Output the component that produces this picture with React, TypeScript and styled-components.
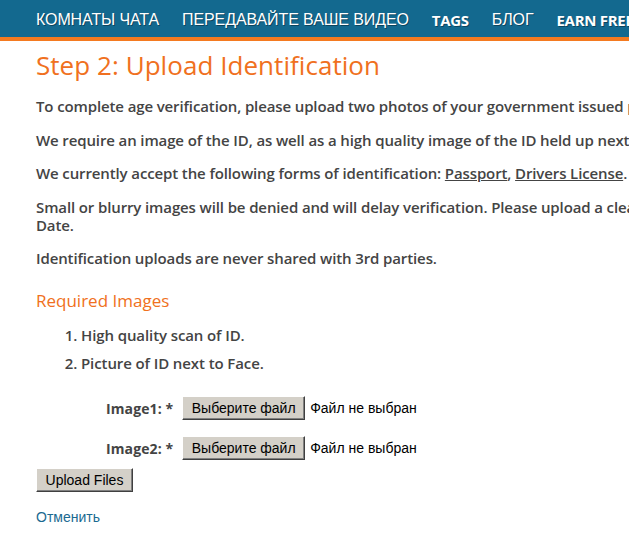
import styled, { createGlobalStyle } from "styled-components";

const Global = createGlobalStyle`
  html, body {
    margin: 0;
    padding: 0;
    background: #ffffff;
  }
  body {
    font-family: "Open Sans", "DejaVu Sans", sans-serif;
    overflow: hidden;
  }
`;

const Nav = styled.nav`
  height: 34px;
  padding: 3px 0 0 36px;
  background: #13698f;
  border-bottom: 4px solid #f47a20;
  display: flex;
  align-items: center;
  gap: 23px;
  white-space: nowrap;
  overflow: hidden;
`;

const NavItem = styled.a<{ $bold?: boolean }>`
  color: #ffffff;
  text-decoration: none;
  text-transform: uppercase;
  font-family: ${(p) =>
    p.$bold ? `"Open Sans", sans-serif` : `"Liberation Sans", Arial, sans-serif`};
  font-weight: ${(p) => (p.$bold ? 700 : 400)};
  font-size: ${(p) => (p.$bold ? "15px" : "16px")};
  letter-spacing: ${(p) => (p.$bold ? "-0.3px" : "-0.1px")};
  text-shadow: 1px 1px 0 rgba(0, 0, 0, 0.35);
`;

const Page = styled.main`
  padding: 9px 0 0 36px;
  color: #444444;
  white-space: nowrap;
`;

const Title = styled.h1`
  margin: 0 0 17px;
  font-size: 26px;
  font-weight: 500;
  letter-spacing: 0.05px;
  color: #f07020;
  line-height: 30px;
`;

const Para = styled.p`
  margin: 0 0 15.5px;
  font-size: 15px;
  font-weight: 600;
  line-height: 18px;
  letter-spacing: -0.12px;
`;

const Doc = styled.a`
  color: #444444;
  text-decoration: underline;
`;

const Subtitle = styled.h2`
  margin: 24px 0 15px;
  font-size: 17px;
  font-weight: 500;
  color: #f07020;
  line-height: 20px;
`;

const List = styled.ol`
  margin: 0;
  padding-left: 45px;
  font-size: 15px;
  font-weight: 600;
  letter-spacing: -0.1px;
  line-height: 18px;

  li {
    margin-bottom: 10px;
  }
`;

const Form = styled.form`
  margin-top: 24px;
  display: flex;
  flex-direction: column;
`;

const FieldRow = styled.div`
  display: flex;
  align-items: center;
  gap: 9px;
  padding-left: 70px;
  height: 24px;
  margin-bottom: 16px;
`;

const Label = styled.label`
  font-size: 14px;
  font-weight: 700;
  color: #444444;
  letter-spacing: 0.1px;
`;

const FileWrap = styled.span`
  display: flex;
  align-items: center;
  gap: 5px;
  font-family: "Liberation Sans", Arial, sans-serif;
  font-size: 14px;
  color: #000000;
`;

const Button = styled.button<{ $w: number }>`
  width: ${(p) => p.$w}px;
  height: 24px;
  padding: 0;
  background: #d4d0c8;
  border: 1px solid;
  border-color: #ffffff #404040 #404040 #ffffff;
  box-shadow: inset -1px -1px 0 #808080;
  font-family: "Liberation Sans", Arial, sans-serif;
  font-size: 14px;
  color: #000000;
`;

const Actions = styled.div`
  margin-top: -8px;
  display: flex;
  flex-direction: column;
  align-items: flex-start;
  gap: 17px;
`;

const Cancel = styled.a`
  font-family: "Liberation Sans", Arial, sans-serif;
  font-size: 14px;
  color: #1b6a91;
  text-decoration: none;
`;

function FileField({ name }: { name: string }) {
  return (
    <FieldRow>
      <Label>{name}: *</Label>
      <FileWrap>
        <Button type="button" $w={123}>
          Выберите файл
        </Button>
        Файл не выбран
      </FileWrap>
    </FieldRow>
  );
}

export default function App() {
  return (
    <>
      <Global />
      <Nav>
        <NavItem href="#">Комнаты чата</NavItem>
        <NavItem href="#">Передавайте ваше видео</NavItem>
        <NavItem href="#" $bold>
          Tags
        </NavItem>
        <NavItem href="#">Блог</NavItem>
        <NavItem href="#" $bold>
          Earn Free Tokens
        </NavItem>
      </Nav>
      <Page>
        <Title>Step 2: Upload Identification</Title>
        <Para>
          To complete age verification, please upload two photos of your government issued photo ID.
        </Para>
        <Para>
          We require an image of the ID, as well as a high quality image of the ID held up next to your face.
        </Para>
        <Para>
          We currently accept the following forms of identification: <Doc href="#">Passport</Doc>,{" "}
          <Doc href="#">Drivers License</Doc>.
        </Para>
        <Para>
          Small or blurry images will be denied and will delay verification. Please upload a clear image showing Birth
          <br />
          Date.
        </Para>
        <Para>Identification uploads are never shared with 3rd parties.</Para>
        <Subtitle>Required Images</Subtitle>
        <List>
          <li>High quality scan of ID.</li>
          <li>Picture of ID next to Face.</li>
        </List>
        <Form>
          <FileField name="Image1" />
          <FileField name="Image2" />
          <Actions>
            <Button type="button" $w={97}>
              Upload Files
            </Button>
            <Cancel href="#">Отменить</Cancel>
          </Actions>
        </Form>
      </Page>
    </>
  );
}
